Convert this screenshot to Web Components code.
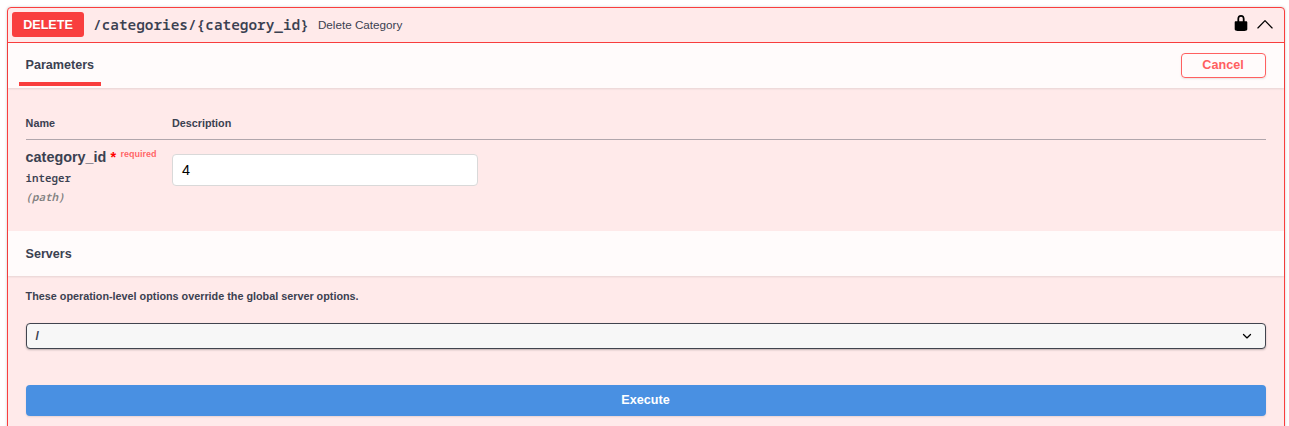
<!DOCTYPE html>
<html lang="en">
<head>
<meta charset="utf-8">
<title>Delete Category</title>
<style>
body{margin:0;background:#fff;font-family:"Liberation Sans",Arial,sans-serif;color:#3b4151;height:426px;overflow:hidden;
--mono:"Noto Sans Mono","Droid Sans Mono","DejaVu Sans Mono",monospace;--red:#f93e3e}
</style>
</head>
<body>
<op-block>
  <op-summary slot="summary" method="DELETE" path="/categories/{category_id}">Delete Category</op-summary>
  <op-section>
    <op-tab slot="title">Parameters</op-tab>
    <op-button slot="action" kind="cancel">Cancel</op-button>
    <param-table>
      <param-row name="category_id" type="integer" in="path">4</param-row>
    </param-table>
  </op-section>
  <op-section>
    <span slot="title">Servers</span>
    <server-picker value="/">These operation-level options override the global server options.</server-picker>
  </op-section>
  <op-button kind="execute">Execute</op-button>
</op-block>
<script>
const define = (name, html) => customElements.define(name, class extends HTMLElement {
  connectedCallback() {
    if (this.shadowRoot) return;
    const t = document.createElement('template');
    t.innerHTML = html;
    this.attachShadow({mode: 'open'}).append(t.content.cloneNode(true));
    this.shadowRoot.querySelectorAll('[data-attr]').forEach(e => {
      e.textContent = this.getAttribute(e.dataset.attr);
    });
  }
});

define('op-block', `<style>
:host{display:block;box-sizing:border-box;margin:7px 4px 0 7px;height:440px;border:1px solid var(--red);border-radius:4px;background:#ffeaea;box-shadow:0 0 3px rgba(0,0,0,.19)}
</style><slot name="summary"></slot><slot></slot>`);

define('op-summary', `<style>
:host{display:flex;align-items:center;box-sizing:border-box;height:35px;padding:0 10px 1px 4px;border-bottom:1px solid var(--red)}
.method{box-sizing:border-box;width:72px;height:25px;padding-top:1px;line-height:25px;border-radius:3px;background:var(--red);color:#fff;text-align:center;font-size:12.6px;font-weight:700;text-shadow:0 1px 0 rgba(0,0,0,.1)}
.path{margin-left:9px;font:600 14.4px/20px var(--mono);white-space:nowrap}
.desc{flex:1;margin-left:9px;font-size:11.7px;line-height:16px}
svg{display:block}
.lock{width:18px;height:18px;margin:0 6px 3px 0}
.arrow{width:18px;height:18px;margin-bottom:1px}
</style>
<span class="method" data-attr="method"></span><span class="path" data-attr="path"></span><span class="desc"><slot></slot></span>
<svg class="lock" viewBox="0 0 20 20"><path d="M15.8 8H14V5.6C14 2.703 12.665 1 10 1 7.334 1 6 2.703 6 5.6V8H4c-.553 0-1 .646-1 1.199V17c0 .549.428 1.139.951 1.307l1.197.387C5.672 18.861 6.55 19 7.1 19h5.8c.549 0 1.428-.139 1.951-.307l1.196-.387c.524-.167.953-.757.953-1.306V9.199C17 8.646 16.352 8 15.8 8zM12 8H8V5.199C8 3.754 8.797 3 10 3c1.203 0 2 .754 2 2.199V8z"/></svg>
<svg class="arrow" viewBox="0 0 20 20"><path d="M17.418 14.908c.272.281.702.281.979 0s.271-.709 0-.969L10.49 5.792a.697.697 0 0 0-.979 0L1.604 13.939c-.271.26-.271.688 0 .969.277.281.707.281.979 0L10 7.25l7.418 7.658z"/></svg>`);

define('op-section', `<style>
:host{display:block}
header{display:flex;align-items:center;justify-content:space-between;height:45px;padding:0 18px 0 17.5px;background:rgba(255,255,255,.8);box-shadow:0 1px 2px rgba(0,0,0,.1);font-size:12.6px;font-weight:700}
</style><header><slot name="title"></slot><slot name="action"></slot></header><slot></slot>`);

define('op-tab', `<style>
:host{display:flex;flex-direction:column;justify-content:space-between;align-self:stretch;margin-left:-7px;padding-bottom:2px;line-height:45px}
span{height:38px;padding:0 7px}
i{display:block;height:4px;background:var(--red)}
</style><span><slot></slot></span><i></i>`);

define('op-button', `<style>
:host{display:block;box-sizing:border-box;border-radius:4px;font-size:12.6px;font-weight:700;text-align:center;box-shadow:0 1px 2px rgba(0,0,0,.1)}
:host([kind=cancel]){width:85px;height:25px;padding-right:1px;line-height:23px;border:1px solid #ff6060;color:#ff6060}
:host([kind=execute]){height:31px;padding-right:1px;line-height:30px;margin:36px 18px 0;background:#4990e2;color:#fff}
</style><slot></slot>`);

define('param-table', `<style>
:host{display:block;box-sizing:border-box;height:143px;padding:18px 18px 0}
.head{display:grid;grid-template-columns:146px 1fr;height:33px;line-height:35px;border-bottom:1px solid rgba(59,65,81,.4);font-size:10.8px;font-weight:700}
.head span{margin-left:-.4px}
.head span+span{margin-left:-.1px}
</style><div class="head"><span>Name</span><span>Description</span></div><slot></slot>`);

define('param-row', `<style>
:host{display:grid;grid-template-columns:146px 1fr}
.name{display:flex;align-items:flex-start;margin:8px 0 0 -.4px;font-size:14.4px;line-height:19px;font-weight:700;white-space:nowrap}
.star{margin-left:4px;color:red}
small{margin-left:4.6px;font-size:9px;line-height:13px;color:rgba(255,0,0,.6)}
.type,.in{font:600 10.8px/16px var(--mono);margin:3px 0 0 -.4px}
.in{font-style:italic;color:gray}
.input{box-sizing:border-box;width:306px;height:32px;margin-top:14px;padding:0 9px;border:1px solid #d9d9d9;border-radius:4px;background:#fff;color:#000;font-size:14.4px;line-height:31px}
</style>
<div><div class="name"><span data-attr="name"></span><span class="star">*</span><small>required</small></div>
<div class="type" data-attr="type"></div><div class="in">(<span data-attr="in"></span>)</div></div>
<div class="input"><slot></slot></div>`);

define('server-picker', `<style>
:host{display:block;padding:12px 18px 0;font-size:10.8px;font-weight:700}
p{margin:0 0 0 -.4px;line-height:16px}
.select{display:flex;align-items:center;justify-content:space-between;box-sizing:border-box;height:26px;margin-top:19px;padding:0 9px 0 8.6px;border:1px solid #41444e;border-radius:4px;background:#f7f7f7;box-shadow:0 1px 2px rgba(0,0,0,.25);font-size:12.6px}
svg{width:18px;height:18px}
</style><p><slot></slot></p><div class="select"><span data-attr="value"></span>
<svg viewBox="0 0 20 20"><path d="M13.418 7.859a.695.695 0 0 1 .978 0 .68.68 0 0 1 0 .969l-3.908 3.83a.697.697 0 0 1-.979 0l-3.908-3.83a.68.68 0 0 1 0-.969.695.695 0 0 1 .978 0L10 11l3.418-3.141z"/></svg></div>`);
</script>
</body>
</html>
